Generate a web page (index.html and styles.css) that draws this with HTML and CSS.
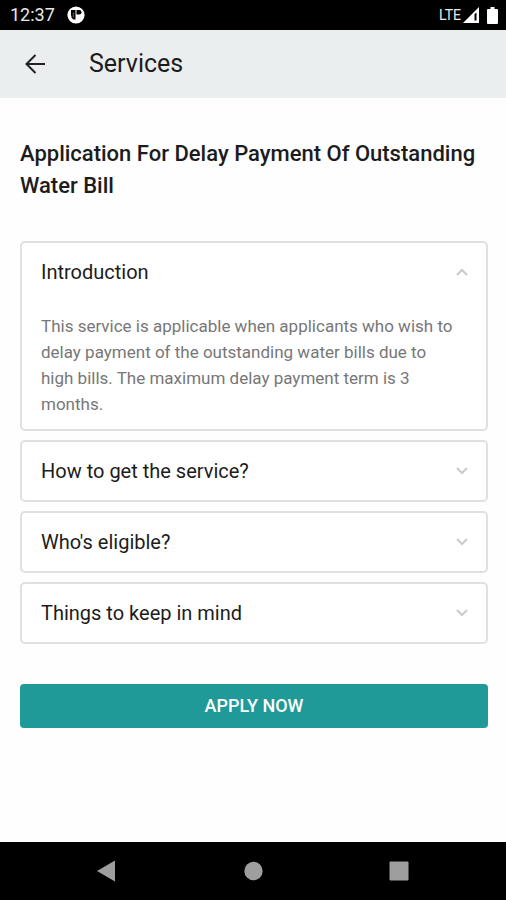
FILE: index.html
```html
<!DOCTYPE html>
<html lang="en">
<head>
  <meta charset="utf-8">
  <meta name="viewport" content="width=device-width, initial-scale=1">
  <title>Services</title>
  <link rel="stylesheet" href="styles.css">
</head>
<body>
  <div class="status-bar">
    <div class="status-group status-left">
      <span class="clock">12:37</span>
      <svg class="app-badge" viewBox="0 0 18 18" aria-hidden="true">
        <circle cx="9" cy="9" r="8.6" fill="#fff"/>
        <path d="M4 4h4.500v9.500H6.500Q4 12 4 9z" fill="#000"/>
        <path d="M6.300 6.500v5" stroke="#666" stroke-width="1"/>
        <path d="M9.500 4h2.500q2.500 0 2.500 2.200T12 8.500H9.500z" fill="#000"/>
      </svg>
    </div>
    <div class="status-group status-right">
      <span class="network">LTE</span>
      <svg class="signal" viewBox="0 0 16 16" aria-hidden="true">
        <path d="M0 16L16 0v16z" fill="#fff"/>
        <path d="M11.500 7v6.500h2V5.500z" fill="#000"/>
      </svg>
      <svg class="battery" viewBox="0 0 11 17" aria-hidden="true">
        <path d="M3.500 0h4v2H10q1 0 1 1v13q0 1-1 1H1q-1 0-1-1V3q0-1 1-1h2.500z" fill="#fff"/>
      </svg>
    </div>
  </div>

  <header class="app-bar">
    <button class="back" type="button" aria-label="Back">
      <svg viewBox="0 0 20 20" aria-hidden="true">
        <path d="M10.500 1L1.500 10l9 9M1.500 10H20"/>
      </svg>
    </button>
    <h1 class="app-title">Services</h1>
  </header>

  <main class="content">
    <h2 class="service-name">Application For Delay Payment Of Outstanding Water Bill</h2>

    <div class="accordion">
      <details class="card" open>
        <summary class="card-head">Introduction
          <svg class="chevron" viewBox="0 0 12 8" aria-hidden="true"><path d="M1 1l5 5 5-5"/></svg>
        </summary>
        <p class="card-body">This service is applicable when applicants who wish to delay payment of the outstanding water bills due to high bills. The maximum delay payment term is 3 months.</p>
      </details>
      <details class="card">
        <summary class="card-head">How to get the service?
          <svg class="chevron" viewBox="0 0 12 8" aria-hidden="true"><path d="M1 1l5 5 5-5"/></svg>
        </summary>
      </details>
      <details class="card">
        <summary class="card-head">Who's eligible?
          <svg class="chevron" viewBox="0 0 12 8" aria-hidden="true"><path d="M1 1l5 5 5-5"/></svg>
        </summary>
      </details>
      <details class="card">
        <summary class="card-head">Things to keep in mind
          <svg class="chevron" viewBox="0 0 12 8" aria-hidden="true"><path d="M1 1l5 5 5-5"/></svg>
        </summary>
      </details>
    </div>

    <button class="apply" type="button">APPLY NOW</button>
  </main>

  <nav class="system-nav" aria-label="System">
    <button class="nav-key" type="button" aria-label="Back">
      <svg viewBox="0 0 20 22" aria-hidden="true"><path d="M0 11L18 0.500v21z"/></svg>
    </button>
    <button class="nav-key" type="button" aria-label="Home">
      <svg viewBox="0 0 20 22" aria-hidden="true"><circle cx="10.500" cy="11" r="9.200"/></svg>
    </button>
    <button class="nav-key" type="button" aria-label="Recent apps">
      <svg viewBox="0 0 20 22" aria-hidden="true"><rect x="0.500" y="1.500" width="19" height="19" rx="1"/></svg>
    </button>
  </nav>
</body>
</html>
```

FILE: styles.css
```css
* {
  box-sizing: border-box;
}

body {
  margin: 0;
  min-height: 100vh;
  display: flex;
  flex-direction: column;
  background: #fefefe;
  color: #1c1c1c;
  font-family: Roboto, "Liberation Sans", sans-serif;
}

button {
  border: 0;
  padding: 0;
  background: none;
  font-family: inherit;
}

svg {
  display: block;
}

.status-bar {
  display: flex;
  justify-content: space-between;
  align-items: center;
  height: 30px;
  padding: 0 8px 0 10px;
  background: #000;
  color: #e8e8e8;
}

.status-group {
  display: flex;
  align-items: center;
}

.status-left {
  gap: 12px;
}

.clock {
  font-size: 18px;
  line-height: 30px;
}

.app-badge {
  width: 18px;
  height: 18px;
}

.network {
  margin-right: 2px;
  font-size: 14px;
  line-height: 30px;
}

.signal {
  width: 16px;
  height: 16px;
  margin-right: 8px;
}

.battery {
  width: 11px;
  height: 17px;
}

.app-bar {
  display: flex;
  align-items: center;
  gap: 44px;
  height: 68px;
  padding: 0 25px;
  background: #eaeeef;
}

.back svg {
  width: 20px;
  height: 20px;
  fill: none;
  stroke: #222;
  stroke-width: 2;
}

.app-title {
  margin: 0;
  font-size: 25px;
  font-weight: 400;
  line-height: 32px;
}

.content {
  flex: 1;
  padding: 40px 18px 40px 20px;
}

.service-name {
  margin: 0 0 39px;
  font-size: 22px;
  font-weight: 500;
  line-height: 32px;
}

.accordion {
  display: grid;
  gap: 9px;
}

.card {
  border: 2px solid #e0e0e0;
  border-radius: 5px;
  background: #fff;
}

.card-head {
  display: flex;
  justify-content: space-between;
  align-items: center;
  padding: 16px 18px 16px 19px;
  font-size: 20px;
  line-height: 26px;
  list-style: none;
  cursor: pointer;
}

.chevron {
  width: 12px;
  height: 8px;
  fill: none;
  stroke: #cacaca;
  stroke-width: 2;
}

.card[open] .chevron {
  transform: rotate(180deg);
}

.card-body {
  margin: 0;
  padding: 12px 26px 12px 19px;
  color: #777;
  font-size: 17px;
  line-height: 26px;
}

.apply {
  display: block;
  width: 100%;
  margin-top: 40px;
  border-radius: 4px;
  background: #1f9a98;
  color: #fff;
  font-size: 18px;
  font-weight: 500;
  line-height: 44px;
}

.system-nav {
  display: flex;
  justify-content: center;
  gap: 126px;
  padding: 18px 0;
  background: #000;
}

.nav-key svg {
  width: 20px;
  height: 22px;
  fill: #9e9e9e;
}
```
